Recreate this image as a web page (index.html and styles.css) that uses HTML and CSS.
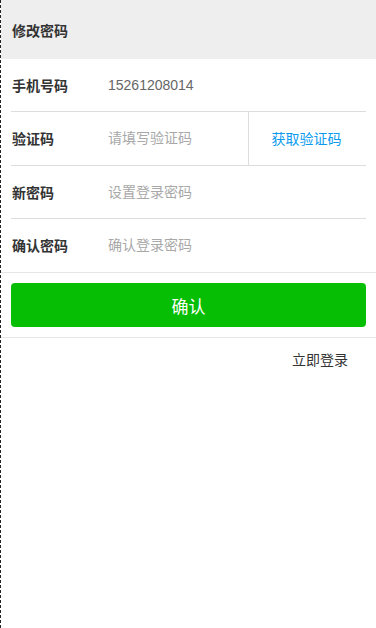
FILE: index.html
```html
<!DOCTYPE html>
<html lang="zh-CN">
<head>
<meta charset="utf-8">
<title>修改密码</title>
<link rel="stylesheet" href="styles.css">
</head>
<body>
<div class="page">
  <header class="header">修改密码</header>
  <form class="form">
    <div class="row">
      <label class="label">手机号码</label>
      <input class="field value" type="text" value="15261208014">
    </div>
    <div class="row">
      <label class="label">验证码</label>
      <input class="field" type="text" placeholder="请填写验证码">
      <button type="button" class="code-btn">获取验证码</button>
    </div>
    <div class="row">
      <label class="label">新密码</label>
      <input class="field" type="password" placeholder="设置登录密码">
    </div>
    <div class="row last">
      <label class="label">确认密码</label>
      <input class="field" type="password" placeholder="确认登录密码">
    </div>
  </form>
  <div class="actions">
    <button type="button" class="submit">确认</button>
  </div>
  <div class="links">
    <a class="login-link">立即登录</a>
  </div>
</div>
</body>
</html>
```
FILE: styles.css
```css
* { box-sizing: border-box; }
html, body {
  margin: 0;
  padding: 0;
  background: #fff;
}
body {
  font-family: "Liberation Sans", "Noto Sans CJK SC", sans-serif;
  font-size: 14px;
  color: #333;
}
.page {
  min-height: 628px;
  border-left: 1px dashed #222;
}
.header {
  height: 59px;
  background: #eeeeee;
  display: flex;
  align-items: center;
  padding-left: 11px;
  font-weight: bold;
  font-size: 14px;
  color: #333;
}
.form {
  margin: 0;
  border-bottom: 1px solid #e6e6e6;
}
.row {
  height: 53.25px;
  margin: 0 10px;
  display: flex;
  align-items: center;
  border-bottom: 1px solid #dddddd;
}
.row.last {
  border-bottom: none;
}
.label {
  width: 97px;
  flex: none;
  font-weight: bold;
  color: #333;
  padding-left: 1px;
}
.field {
  flex: 1;
  min-width: 0;
  border: none;
  outline: none;
  font: inherit;
  font-size: 14px;
  padding: 0;
  color: #666;
  background: transparent;
}
.field::placeholder {
  color: #a8a8a8;
}
.code-btn {
  flex: none;
  width: 118px;
  height: 100%;
  border: none;
  border-left: 1px solid #dddddd;
  background: transparent;
  font: inherit;
  font-size: 14px;
  color: #0a9bef;
  padding: 0 2px 0 0;
}
.actions {
  padding: 10px 10px;
  border-bottom: 1px solid #e6e6e6;
}
.submit {
  display: block;
  width: 100%;
  height: 44px;
  border: none;
  border-radius: 4px;
  background: #06be04;
  color: #fff;
  font: inherit;
  font-size: 17px;
}
.links {
  display: flex;
  justify-content: flex-end;
  padding: 14px 28px 0 0;
}
.login-link {
  color: #333;
  font-size: 14px;
  line-height: 16px;
}
```
